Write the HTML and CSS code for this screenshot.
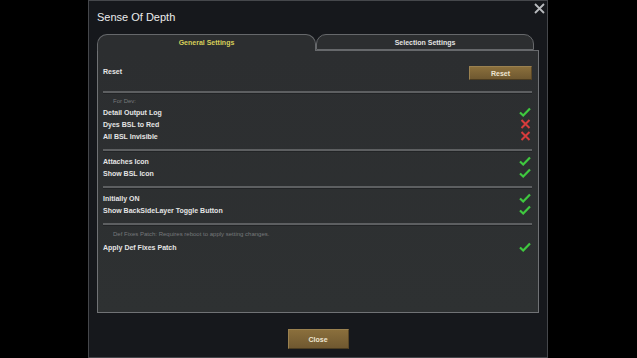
FILE: index.html
```html
<!DOCTYPE html>
<html lang="en">
  <head>
    <meta charset="UTF-8" />
    <title>Sense Of Depth</title>
    <link rel="stylesheet" href="styles.css">
  </head>

  <body>
    <div class="window">
      <div class="title">Sense Of Depth</div>
      <svg class="closeX" width="11" height="11" viewBox="0 0 11 11">
        <path d="M1 1 L10 10 M10 1 L1 10" stroke="#b9bbbe" stroke-width="1.8" />
      </svg>

      <div class="tabs">
        <div class="tab active">General Settings</div>
        <div class="tab">Selection Settings</div>
      </div>

      <div class="panel">
        <div class="resetRow">
          <span>Reset</span>
          <button class="btn resetBtn">Reset</button>
        </div>

        <div class="sep"></div>
        <div class="note">For Dev:</div>
        <div class="row"><span>Detail Output Log</span><span class="ok"></span></div>
        <div class="row"><span>Dyes BSL to Red</span><span class="no"></span></div>
        <div class="row"><span>All BSL Invisible</span><span class="no"></span></div>

        <div class="sep"></div>
        <div class="row"><span>Attaches Icon</span><span class="ok"></span></div>
        <div class="row"><span>Show BSL Icon</span><span class="ok"></span></div>

        <div class="sep"></div>
        <div class="row"><span>Initially ON</span><span class="ok"></span></div>
        <div class="row"><span>Show BackSideLayer Toggle Button</span><span class="ok"></span></div>

        <div class="sep"></div>
        <div class="note">Def Fixes Patch: Requires reboot to apply setting changes.</div>
        <div class="row"><span>Apply Def Fixes Patch</span><span class="ok"></span></div>
      </div>

      <div class="footer">
        <button class="btn closeBtn">Close</button>
      </div>
    </div>

    <script>
      const okIcon =
        '<svg width="12" height="10" viewBox="0 0 12 10"><path d="M1 5.5 L4.2 8.5 L11 1.5" fill="none" stroke="#3fc83f" stroke-width="2.2"/></svg>';
      const noIcon =
        '<svg width="11" height="10" viewBox="0 0 11 10"><path d="M1.5 1 L9.5 9 M9.5 1 L1.5 9" fill="none" stroke="#d63c3c" stroke-width="2"/></svg>';
      document.querySelectorAll(".ok").forEach((el) => (el.innerHTML = okIcon));
      document.querySelectorAll(".no").forEach((el) => (el.innerHTML = noIcon));
    </script>
  </body>
</html>
```

FILE: styles.css
```css
body {
  margin: 0;
  background-color: #000;
  font-family: "Liberation Sans", Arial, sans-serif;
  color: #e6e6e6;
}
.window {
  position: relative;
  margin-left: 88px;
  width: 460px;
  height: 358px;
  box-sizing: border-box;
  border: 1px solid #45474b;
  background-color: #16181c;
  padding: 0 8px;
}
.title {
  height: 33px;
  line-height: 33px;
  font-size: 11px;
  color: #ececec;
}
.closeX {
  position: absolute;
  top: 2px;
  right: 2px;
}
.tabs {
  display: flex;
  height: 16px;
}
.tab {
  box-sizing: border-box;
  height: 17px;
  width: 219px;
  border: 1px solid #66686b;
  border-bottom: none;
  border-radius: 10px 10px 0 0;
  background-color: #2c2e30;
  text-align: center;
  font-size: 7px;
  font-weight: bold;
  line-height: 15px;
  color: #e2e2e2;
}
.tab.active {
  position: relative;
  z-index: 1;
  color: #d6cf5a;
}
.tab + .tab {
  width: 218px;
  height: 16px;
  border-bottom: 1px solid #66686b;
}
.panel {
  box-sizing: border-box;
  width: 442px;
  height: 263px;
  border: 1px solid #707275;
  border-top-color: #66686b;
  background: linear-gradient(#2c2e30, #2e3132);
  padding: 0 6px 0 5px;
  font-size: 7px;
  font-weight: bold;
}
.resetRow {
  margin-top: 15px;
  height: 14px;
  display: flex;
  justify-content: space-between;
  align-items: center;
}
.resetRow span {
  margin-top: -3px;
}
.btn {
  font-family: "Liberation Sans", Arial, sans-serif;
  font-weight: bold;
  color: #efe6d2;
  background: linear-gradient(#8a6f3c, #6f5830);
  border: 1px solid #9a8150;
  border-bottom-color: #4a3b20;
  border-right-color: #5a4726;
  padding: 0;
}
.resetBtn {
  width: 63px;
  height: 14px;
  font-size: 7px;
}
.sep {
  margin-top: 11px;
  height: 2px;
  background-color: #5d5f61;
  border-bottom: 1px solid #222426;
}
.note {
  height: 10px;
  line-height: 10px;
  padding-left: 10px;
  font-size: 6px;
  font-weight: normal;
  color: #77797b;
}
.row {
  height: 12px;
  display: flex;
  justify-content: space-between;
  align-items: center;
  color: #e4e4e4;
}
.row .ok,
.row .no {
  display: flex;
  margin-right: 1px;
}
.sep + .row {
  margin-top: 3px;
}
.row + .sep {
  margin-top: 7px;
}
.sep + .note {
  margin-top: 2px;
}
.note + .row {
  margin-top: 0;
}
.row + .sep + .note {
  margin-top: 3px;
}
.row + .sep + .note + .row {
  margin-top: 2px;
}
.footer {
  display: flex;
  justify-content: center;
  padding-top: 16px;
}
.closeBtn {
  width: 61px;
  height: 20px;
  font-size: 7px;
}
```
